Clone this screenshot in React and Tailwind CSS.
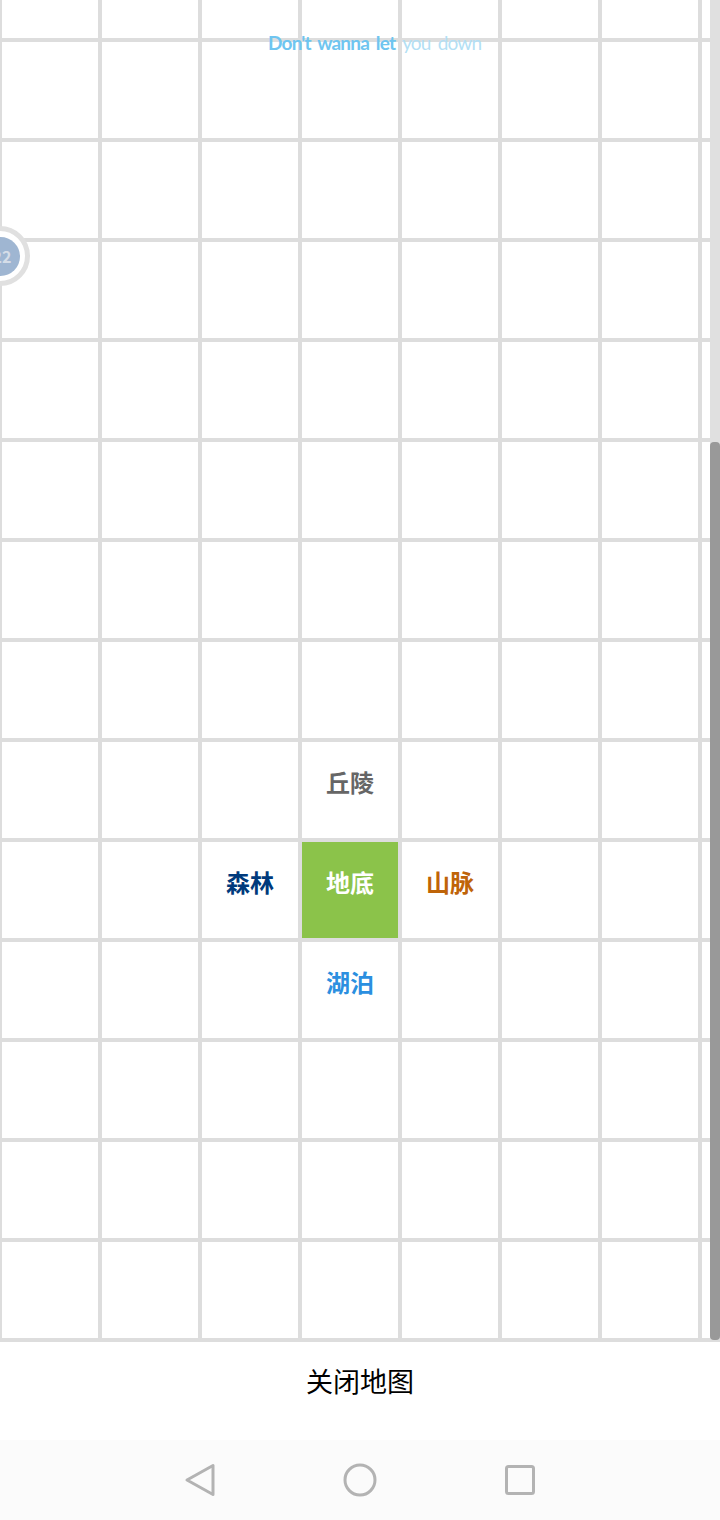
const tiles = {
  '8-3': { label: '丘陵', text: 'text-[#666666]' },
  '9-2': { label: '森林', text: 'text-[#003a7c]' },
  '9-3': { label: '地底', text: 'text-white', fill: 'bg-[#8bc34a]' },
  '9-4': { label: '山脉', text: 'text-[#bf6408]' },
  '10-3': { label: '湖泊', text: 'text-[#2b8fe0]' },
};

const rows = Array.from({ length: 14 }, (_, i) => i);
const cols = Array.from({ length: 8 }, (_, i) => i);

const Cell = ({ tile }) => (
  <div className="w-[100px] h-[100px] border-2 border-[#dddddd]">
    {tile && (
      <div className={`w-full h-full flex items-center justify-center pb-[17px] text-2xl font-bold ${tile.text} ${tile.fill || ''}`}>
        {tile.label}
      </div>
    )}
  </div>
);

export default function App() {
  return (
    <div className="w-[720px] h-[1520px] flex flex-col overflow-hidden bg-white font-['Noto_Sans_CJK_SC','Noto_Sans',sans-serif]">
      {/* Map + scrollbar */}
      <div className="relative h-[1340px] flex">
        <div className="w-[710px] h-full overflow-hidden">
          <div className="-mt-[60px] grid grid-cols-[repeat(8,100px)]">
            {rows.map((r) =>
              cols.map((c) => <Cell key={`${r}-${c}`} tile={tiles[`${r}-${c}`]} />)
            )}
          </div>
        </div>
        <div className="w-[10px] h-full flex flex-col bg-[#e0e0e0]">
          <div className="h-[442px]" />
          <div className="flex-1 bg-[#999999] rounded-sm" />
        </div>

        {/* Lyric overlay */}
        <div className="absolute left-[268px] top-[31px] whitespace-nowrap font-['Lato',sans-serif] font-bold text-[19px] leading-[24px] tracking-[-0.8px] [word-spacing:3px]">
          <span className="text-[#6fc5f0]">Don't wanna let </span>
          <span className="text-[#b3dff5] font-normal">you down</span>
        </div>

        {/* Player pin, cut by the left edge */}
        <div className="absolute -left-[30px] top-[226px] w-[60px] h-[60px] rounded-full border-[5px] border-[#e0e0e0] bg-white flex items-center justify-center">
          <div className="w-[39px] h-[39px] rounded-full bg-[#9fb6d2] flex items-center justify-end text-[16px] font-bold text-[#d5dde8] leading-none pr-[8px]">
            22
          </div>
        </div>
      </div>

      {/* Close button */}
      <div className="h-[100px] border-t-2 border-[#dddddd] flex items-center justify-center pb-[19px] text-[27px] text-black">
        关闭地图
      </div>

      {/* Android nav bar */}
      <div className="flex-1 bg-[#fbfbfb] flex items-center justify-center gap-[116px] text-[#b3b3b3]">
        <svg width="44" height="44" viewBox="0 0 44 44" fill="none" stroke="currentColor" strokeWidth="3" strokeLinejoin="round">
          <path d="M35 7.500 L35 36.500 L9 22 Z" />
        </svg>
        <svg width="44" height="44" viewBox="0 0 44 44" fill="none" stroke="currentColor" strokeWidth="3">
          <circle cx="22" cy="22" r="15" />
        </svg>
        <svg width="44" height="44" viewBox="0 0 44 44" fill="none" stroke="currentColor" strokeWidth="3" strokeLinejoin="round">
          <rect x="8.500" y="8.500" width="27" height="27" rx="2" />
        </svg>
      </div>
    </div>
  );
}
